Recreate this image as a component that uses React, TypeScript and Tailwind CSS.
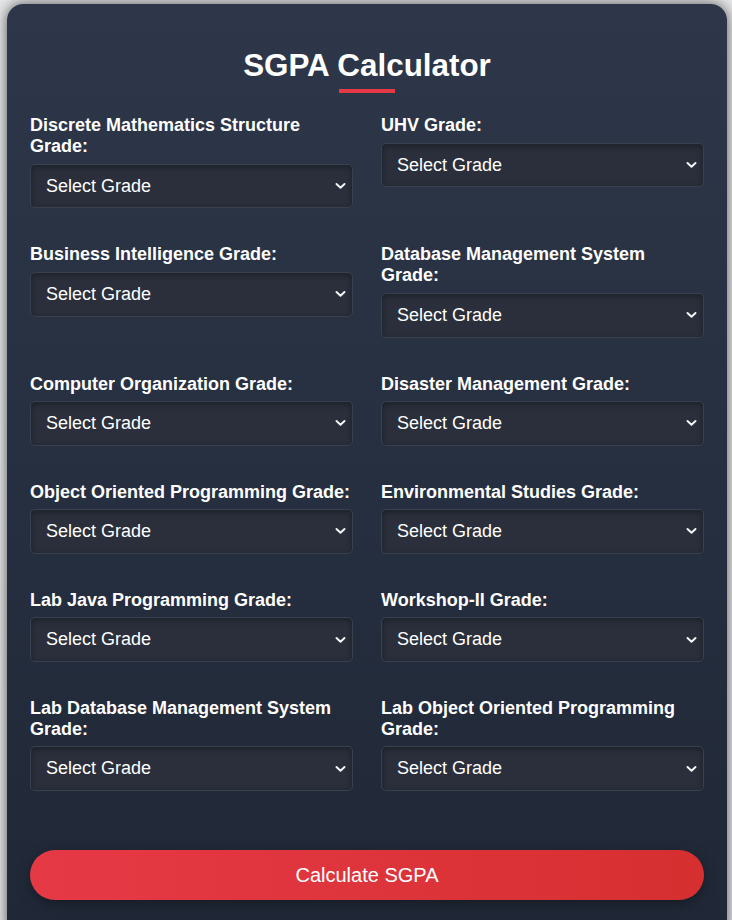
import { useState } from 'react';

const subjects = [
  'Discrete Mathematics Structure',
  'UHV',
  'Business Intelligence',
  'Database Management System',
  'Computer Organization',
  'Disaster Management',
  'Object Oriented Programming',
  'Environmental Studies',
  'Lab Java Programming',
  'Workshop-II',
  'Lab Database Management System',
  'Lab Object Oriented Programming',
];

const grades = ['O', 'A+', 'A', 'B+', 'B', 'C', 'P', 'F'];

const GradeSelect = ({ name }: { name: string }) => {
  const [value, setValue] = useState('');
  return (
    <div>
      <label className="mb-[6.5px] block pt-[1px] text-[18px] font-bold leading-[21px] text-white">
        {name} Grade:
      </label>
      <div className="relative">
        <select
          value={value}
          onChange={(e) => setValue(e.target.value)}
          className="h-[44.6px] w-full cursor-pointer appearance-none rounded-[5px] border border-[#394050] bg-[#2a2f3b] pl-[15px] pr-8 text-[18px] text-white shadow-[inset_0_2px_6px_rgba(0,0,0,0.35)] outline-none"
        >
          <option value="">Select Grade</option>
          {grades.map((g) => (
            <option key={g} value={g}>
              {g}
            </option>
          ))}
        </select>
        <svg
          className="pointer-events-none absolute right-[7px] top-1/2 h-[7px] w-[11px] -translate-y-1/2"
          viewBox="0 0 11 7"
          fill="none"
        >
          <path d="M1.5 1.5 L5.5 5.2 L9.5 1.5" stroke="#f3f4f6" strokeWidth="2" strokeLinecap="round" strokeLinejoin="round" />
        </svg>
      </div>
    </div>
  );
};

const App = () => {
  return (
    <div className="min-h-screen bg-[#e6e7e9] pt-[4px] font-[family-name:Liberation_Sans,Arial,sans-serif]">
      <div className="ml-[7px] w-[720px] rounded-2xl bg-gradient-to-b from-[#2d3749] to-[#202837] px-[23px] pb-10 pt-[44px] shadow-[0_0_14px_rgba(0,0,0,0.65)]">
        <h1 className="text-center text-[31.4px] font-bold leading-[36px] text-white">SGPA Calculator</h1>
        <div className="mx-auto mt-[5px] h-1 w-14 bg-[#e63946]" />

        <div className="mt-[21.4px] grid grid-cols-2 gap-x-[28px] gap-y-[35px]">
          {subjects.map((s) => (
            <GradeSelect key={s} name={s} />
          ))}
        </div>

        <button className="mt-[59px] h-[50px] w-full rounded-full bg-gradient-to-r from-[#e63946] to-[#d62f30] text-[20px] text-white shadow-[0_4px_14px_rgba(0,0,0,0.35)]">
          Calculate SGPA
        </button>
      </div>
    </div>
  );
};

export default App;
